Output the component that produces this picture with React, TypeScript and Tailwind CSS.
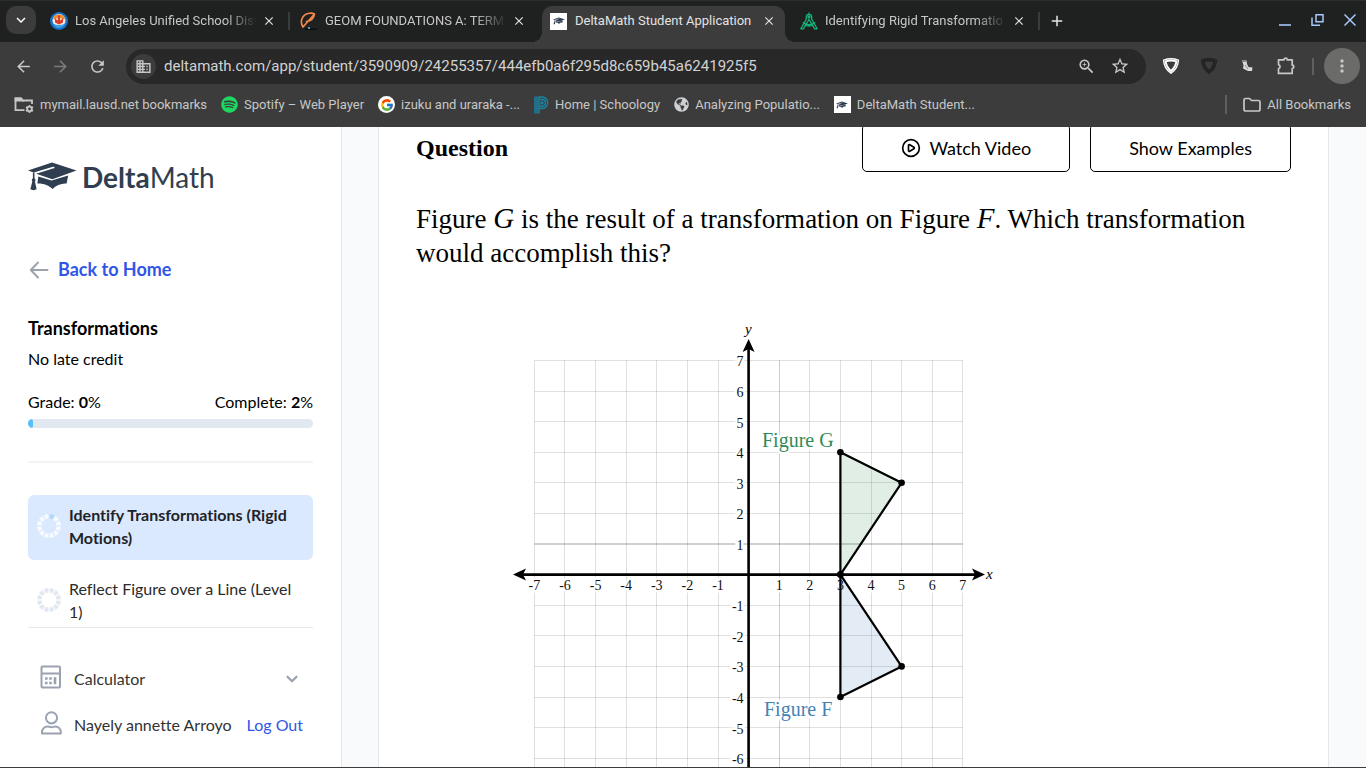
import React, { useState } from 'react';
import { ChevronDown, CirclePlay } from 'lucide-react';
import {
  MdArrowBack,
  MdArrowForward,
  MdRefresh,
  MdBusiness,
  MdZoomIn,
  MdStarBorder,
  MdMoreVert,
  MdClose,
  MdAdd,
  MdKeyboardArrowDown
} from 'react-icons/md';
import { FaSpotify, FaGlobeAmericas } from 'react-icons/fa';
import { FcGoogle } from 'react-icons/fc';

interface Tab {
  id: number;
  title: string;
  icon: React.ReactNode;
  divider: boolean;
}

interface Bookmark {
  title: string;
  icon: React.ReactNode;
}

type Point = [number, number];

function CapIcon({ className }: { className: string }) {
  return (
    <svg viewBox="0 0 50 30" className={className} fill="currentColor" aria-hidden="true">
      <path d="M10.5 14.5 24 18.6 41 13.4 39.4 21.6C34 21.2 28.500 23.400 25 27.200 21.500 23.400 15 21.200 9.600 21.600Z" />
      <path d="M0 8.300 24.500 0.300 49.500 8.300 24.800 17.200 8.400 11.700 25.400 6.300C27.600 6.500 27.600 4.300 25.500 4.600L5.900 10.400Z" />
      <path d="M5 10.500H6.600V16.200C7.900 17.200 7.900 18.700 7.100 19.700L8.800 27.600C6.800 28.700 4.200 28.700 2.400 27.600L4.400 19.700C3.600 18.700 3.700 17.200 5 16.200Z" />
    </svg>
  );
}

function CapTile() {
  return (
    <span className="flex size-[17px] shrink-0 items-center justify-center bg-white text-[#2d3a4d]">
      <CapIcon className="h-2 w-3" />
    </span>
  );
}

function DistrictIcon() {
  return (
    <svg viewBox="0 0 18 18" className="size-[18px] shrink-0" aria-hidden="true">
      <circle cx="9" cy="9" r="9" fill="#1674cc" />
      <circle cx="9" cy="8.500" r="6.500" fill="#f7ece2" />
      <path d="M3 6.500A6.500 6.500 0 0 1 15 6.500L12.500 8 11 5.500 9 9 7 5.500 5.500 8Z" fill="#f08a24" />
      <path d="M8 3.500h2v5l3-2v4l-4 2-4-2v-4l3 2Z" fill="#dc3a2c" />
      <path d="M3 11.500q6 3 12 0-2 4.500-6 4.500t-6-4.500Z" fill="#3fa0e8" />
    </svg>
  );
}

function EdgeIcon() {
  return (
    <svg viewBox="0 0 17 18" className="h-[18px] w-[17px] shrink-0" fill="none" aria-hidden="true">
      <path d="M3 15C-.5 10 2 3 8 1.500c2.500-.6 5-.3 6.500.5C14 6 11 9 6.500 9.500M3 15 14.300 2.200" stroke="#f0884a" strokeWidth="1.700" strokeLinecap="round" strokeLinejoin="round" />
      <path d="M5 17.200h12" stroke="#0c0f10" strokeWidth="1.500" />
      <path d="M8 16h2" stroke="#6ec6e8" strokeWidth="1.500" />
    </svg>
  );
}

function CompassIcon() {
  return (
    <svg viewBox="0 0 18 18" className="size-[18px] shrink-0" fill="none" stroke="#17b37b" strokeWidth="1.300" strokeLinejoin="round" aria-hidden="true">
      <path d="M9 .5v1.500M6.300 5a2.700 2.700 0 0 1 5.400 0v2.200l5.500 9.600h-2.600L9 7.500 3.400 16.800H.8L6.300 7.200Z" />
      <circle cx="9" cy="5" r="1" />
      <path d="M2.800 10.300q6.200 4.700 12.400 0M4.500 13q4.500 2 9 0" />
    </svg>
  );
}

function ManagedFolderIcon() {
  return (
    <svg viewBox="0 0 20 18" className="h-[18px] w-5 shrink-0" fill="none" stroke="#c7c7c7" strokeWidth="1.800" aria-hidden="true">
      <path d="M10.500 14.100H1.500V2.500H7l2 2h9v3.500" />
      <path d="M1.500 2.500H7l1.500 2h-7Z" fill="#c7c7c7" />
      <circle cx="15.500" cy="13" r="2.300" />
      <path d="M15.500 9v1.500M15.500 15.500V17M12 11l1.400.8M17.600 14.200l1.400.8M12 15l1.400-.8M17.600 11.800l1.400-.8" strokeWidth="1.600" />
    </svg>
  );
}

function PowerSchoolIcon() {
  return (
    <svg viewBox="0 0 15 18" className="h-[18px] w-[15px] shrink-0" fill="none" stroke="#1787a8" aria-hidden="true">
      <path d="M1 .5v17M3 .5v17M5 .5v17" strokeWidth="1.400" />
      <path d="M5 1h3a5.500 5.500 0 0 1 0 11.500H5M6 3.500h2a3.200 3.200 0 0 1 0 6.700H6M6.500 6h1.500a.8.800 0 0 1 0 1.800H6.500" strokeWidth="1.400" />
    </svg>
  );
}

function ShieldIcon({ className }: { className: string }) {
  return (
    <svg viewBox="0 0 18 18" className={className} fill="none" stroke="currentColor" strokeLinejoin="round" aria-hidden="true">
      <path d="M1.600 3.200Q9 .4 16.400 3.200 16 11.500 9 16.200 2 11.500 1.600 3.200Z" strokeWidth="1.400" />
      <path d="M3.600 4.400Q9 2.500 14.400 4.400 13.500 10.500 9 14 4.500 10.500 3.600 4.400Z" strokeWidth="2" />
    </svg>
  );
}

function BootIcon() {
  return (
    <svg viewBox="-2 -2 18 18" className="size-[18px]" aria-hidden="true">
      <path d="M2 1.500h4.500L7 5l1.500 3 4 .5-.5 3.500H8L3 9.500 3.500 6Z" fill="#d9d9d9" />
      <path d="M2 2.500h4M5 6l3 4" stroke="#8a8a8a" strokeWidth="1" />
    </svg>
  );
}

function PuzzleIcon() {
  return (
    <svg viewBox="0 0 20 20" className="size-5" fill="none" stroke="currentColor" strokeWidth="1.700" strokeLinejoin="round" aria-hidden="true">
      <path d="M2.500 3.800H8a1.600 1.600 0 0 1 3.200 0h5v5.400a1.600 1.600 0 0 1 0 3.200v5H2.500v-4.600a2.200 2.200 0 0 0 0-4.200Z" />
    </svg>
  );
}

function FolderIcon() {
  return (
    <svg viewBox="0 0 18 16" className="h-4 w-[18px]" fill="none" stroke="currentColor" strokeWidth="1.700" strokeLinejoin="round" aria-hidden="true">
      <path d="M1 3a1.500 1.500 0 0 1 1.500-1.500h4l2 2H15.500A1.500 1.500 0 0 1 17 5v7.500a1.500 1.500 0 0 1-1.500 1.500h-13A1.500 1.500 0 0 1 1 12.500Z" />
    </svg>
  );
}

function CalculatorIcon() {
  return (
    <svg viewBox="0 0 22 24" className="mb-1 h-6 w-[22px] shrink-0" fill="none" stroke="#9aa1b1" strokeWidth="2" aria-hidden="true">
      <rect x="1.500" y="1.500" width="18.500" height="21" rx="1" />
      <path d="M1.500 8.500h18.500" />
      <path d="M5 13.500h2.600M9.200 13.500h2.600M5 18h2.600M9.200 18h2.600" strokeWidth="2.600" />
      <path d="M15 12.200v7.100" strokeWidth="2.600" />
    </svg>
  );
}

function UserIcon() {
  return (
    <svg viewBox="0 0 22 24" className="mb-1 h-6 w-[22px] shrink-0" fill="none" stroke="#9aa1b1" strokeWidth="2" strokeLinejoin="round" aria-hidden="true">
      <circle cx="11.500" cy="6.800" r="5.600" />
      <path d="M2 22.500v-1.500c0-3 2.500-5.500 5.500-5.500 1.500 0 2.300.7 4 .7s2.300-.7 3.800-.7c3 0 5.500 2.500 5.500 5.500v1.500Z" />
    </svg>
  );
}

const tabs: Tab[] = [
  { id: 1, title: 'Los Angeles Unified School Dist', icon: <DistrictIcon />, divider: true },
  { id: 2, title: 'GEOM FOUNDATIONS A: TERM', icon: <EdgeIcon />, divider: false },
  { id: 3, title: 'DeltaMath Student Application', icon: <CapTile />, divider: false },
  { id: 4, title: 'Identifying Rigid Transformatio', icon: <CompassIcon />, divider: true }
];

const bookmarks: Bookmark[] = [
  { title: 'mymail.lausd.net bookmarks', icon: <ManagedFolderIcon /> },
  { title: 'Spotify – Web Player', icon: <FaSpotify className="size-[17px] shrink-0 text-[#1ed760]" /> },
  {
    title: 'izuku and uraraka -...',
    icon: (
      <span className="flex size-[17px] shrink-0 items-center justify-center rounded-full bg-white">
        <FcGoogle className="size-3.5" />
      </span>
    )
  },
  { title: 'Home | Schoology', icon: <PowerSchoolIcon /> },
  { title: 'Analyzing Populatio...', icon: <FaGlobeAmericas className="size-[15px] shrink-0 text-[#cdd0d4]" /> },
  { title: 'DeltaMath Student...', icon: <CapTile /> }
];

function TabStrip() {
  const [active, setActive] = useState(3);

  return (
    <div className="flex h-[42px] items-end border-t border-[#2c2e2d] bg-[#1f2120] text-[13px] text-[#c7c7c7]">
      <button aria-label="Search tabs" className="mb-2 ml-1.5 mr-1.5 flex h-7 w-[30px] items-center justify-center rounded-[10px] bg-[#3c3c3c] text-white">
        <MdKeyboardArrowDown className="size-[18px]" />
      </button>
      {tabs.map((tab) => (
        <div key={tab.id} className="flex h-9 w-[250px] items-center">
          <div className={`relative flex h-9 w-[243px] items-center rounded-t-[10px] pb-1.5 pl-2 pr-2 ${tab.id === active ? 'bg-[#3c3c3c] text-[#e3e3e3]' : ''}`}>
            {tab.id === active && (
              <>
                <span className="absolute -left-2.5 bottom-0 size-2.5 bg-[radial-gradient(circle_at_0_0,#1f2120_10px,#3c3c3c_10px)]"></span>
                <span className="absolute -right-2.5 bottom-0 size-2.5 bg-[radial-gradient(circle_at_100%_0,#1f2120_10px,#3c3c3c_10px)]"></span>
              </>
            )}
            <span className="mr-2 flex w-[17px] shrink-0 justify-center">{tab.icon}</span>
            <button
              onClick={() => setActive(tab.id)}
              className={`min-w-0 flex-1 overflow-hidden whitespace-nowrap text-left ${tab.id === active ? '' : '[mask-image:linear-gradient(to_right,black_150px,transparent_182px)]'}`}
            >
              {tab.title}
            </button>
            <button aria-label={`Close ${tab.title}`} className="flex size-4 shrink-0 items-center justify-center text-[#e3e3e3]">
              <MdClose className="size-3.5" />
            </button>
          </div>
          {tab.divider && <span className="mb-1.5 ml-[3px] h-[18px] w-0.5 bg-[#3c3c3c]"></span>}
        </div>
      ))}
      <button aria-label="New tab" className="mb-3 ml-1.5 flex size-[18px] items-center justify-center text-[#e3e3e3]">
        <MdAdd className="size-[18px]" />
      </button>
      <div className="mb-4 ml-auto mr-2.5 flex items-center gap-5 text-[#a8c7fa]">
        <button aria-label="Minimize">
          <svg viewBox="0 0 12 12" className="size-3" stroke="currentColor" strokeWidth="1.600"><path d="M0 11h12" /></svg>
        </button>
        <button aria-label="Restore">
          <svg viewBox="0 0 13 12" className="h-3 w-[13px]" fill="none" stroke="currentColor" strokeWidth="1.500"><path d="M5 .8h7v7H5ZM1 3.500v7.700h8" /></svg>
        </button>
        <button aria-label="Close window">
          <svg viewBox="0 0 12 12" className="size-3" stroke="currentColor" strokeWidth="1.500"><path d="m.5.5 11 11M11.500.5l-11 11" /></svg>
        </button>
      </div>
    </div>
  );
}

function Toolbar() {
  return (
    <div className="flex h-12 items-center bg-[#3c3c3c] pl-3.5 pr-1.5 text-[#c7c7c7]">
      <div className="flex w-28 items-center gap-[18px]">
        <button aria-label="Back"><MdArrowBack className="size-[19px]" /></button>
        <button aria-label="Forward" className="text-[#7c7c7c]"><MdArrowForward className="size-[19px]" /></button>
        <button aria-label="Reload"><MdRefresh className="size-[19px]" /></button>
      </div>
      <div className="flex h-[35px] flex-1 items-center rounded-full bg-[#282828] pl-[5px] pr-4">
        <span className="flex size-[25px] items-center justify-center rounded-full bg-[#3c3c3c]">
          <MdBusiness className="size-[17px]" />
        </span>
        <input
          aria-label="Address"
          className="ml-2 min-w-0 flex-1 bg-transparent text-[15px] text-[#d2d2d2] outline-none"
          defaultValue="deltamath.com/app/student/3590909/24255357/444efb0a6f295d8c659b45a6241925f5"
        />
        <button aria-label="Zoom" className="mr-3.5"><MdZoomIn className="size-[19px]" /></button>
        <button aria-label="Bookmark this tab"><MdStarBorder className="size-5" /></button>
      </div>
      <div className="ml-4 flex items-center gap-5">
        <button aria-label="Web filter"><ShieldIcon className="size-[18px] text-white" /></button>
        <button aria-label="Web filter (inactive)"><ShieldIcon className="size-[18px] text-[#222222]" /></button>
        <button aria-label="Boot"><BootIcon /></button>
        <button aria-label="Extensions"><PuzzleIcon /></button>
      </div>
      <span className="ml-4 mr-2.5 h-[17px] w-0.5 bg-[#5f5f5f]"></span>
      <button aria-label="Menu" className="flex size-9 items-center justify-center rounded-full bg-[#6b6b69]">
        <MdMoreVert className="size-5" />
      </button>
    </div>
  );
}

function BookmarksBar() {
  return (
    <nav className="flex h-[37px] items-center bg-[#3c3c3c] pb-2 pl-3.5 pr-[15px] text-[13px] text-[#c7c7c7]">
      <div className="flex items-center gap-3.5">
        {bookmarks.map((item) => (
          <a key={item.title} href="#" className="flex items-center gap-1.5 whitespace-nowrap">
            {item.icon}
            {item.title}
          </a>
        ))}
      </div>
      <a href="#" className="ml-auto flex items-center gap-1.5 border-l-2 border-[#5f5f5f] pl-4">
        <FolderIcon />
        All Bookmarks
      </a>
    </nav>
  );
}

function ProgressRing({ started }: { started: boolean }) {
  return (
    <svg viewBox="0 0 24 24" className="size-6 shrink-0" fill="none" strokeWidth="4.500" aria-hidden="true">
      {Array.from({ length: 12 }, (_, i) => {
        const color = started ? (i === 0 ? '#b3d6fb' : '#f7faff') : '#e2e8f0';
        return <path key={i} d="M12.600 2.300A9.700 9.700 0 0 1 16.300 3.300" stroke={color} transform={`rotate(${i * 30} 12 12)`} />;
      })}
    </svg>
  );
}

function Sidebar() {
  return (
    <aside className="flex w-[342px] shrink-0 flex-col border-r border-gray-200 bg-white px-7 font-['Lato',sans-serif] text-black [font-variant-ligatures:none]">
      <a href="#" aria-label="DeltaMath" className="mt-[26px] flex h-12 items-center gap-[5px] text-[#2f3e50]">
        <CapIcon className="h-[30px] w-[49px]" />
        <span className="text-[28px] leading-10">
          <span className="font-bold">Delta</span>
          <span>Math</span>
        </span>
      </a>
      <a href="#" className="mt-[54px] flex h-7 items-center gap-2 text-[18px] font-bold text-[#3056e8]">
        <svg viewBox="0 0 22 20" className="h-5 w-[22px]" fill="none" stroke="#9ca3af" strokeWidth="2" strokeLinecap="round" strokeLinejoin="round">
          <path d="M19.500 11H3M10 3.500 2.800 11l7.200 7.500" />
        </svg>
        Back to Home
      </a>
      <h2 className="mt-[33px] text-[18px] font-bold leading-6">Transformations</h2>
      <p className="mt-[7px] text-[16px] leading-6">No late credit</p>
      <div className="mt-[19px] flex justify-between text-[16px] leading-6">
        <span>Grade: <b>0</b>%</span>
        <span>Complete: <b>2</b>%</span>
      </div>
      <div role="progressbar" aria-valuenow={2} className="mt-[5px] h-[9px] overflow-hidden rounded-full bg-slate-200">
        <div className="h-full w-[5px] rounded-full bg-[#54c1f8]"></div>
      </div>
      <hr className="mt-[33px] border-t-2 border-gray-100" />
      <ul className="mt-8 min-h-0 flex-1 space-y-[9px] overflow-hidden border-b border-gray-200 text-[16px] leading-[23px] text-[#2b2b2b]">
        <li>
          <a href="#" className="flex items-center gap-2 rounded-md bg-[#dbe9fe] pb-[11px] pl-[9px] pr-3 pt-2 font-bold text-[#1f2328]">
            <ProgressRing started={true} />
            Identify Transformations (Rigid Motions)
          </a>
        </li>
        <li>
          <a href="#" className="flex items-center gap-2 pb-[11px] pl-[9px] pr-3 pt-2">
            <ProgressRing started={false} />
            Reflect Figure over a Line (Level 1)
          </a>
        </li>
      </ul>
      <div className="flex h-[139px] shrink-0 flex-col pl-3 pr-2.5 pt-7 text-[16px] text-[#333333]">
        <button className="flex h-[46px] items-center text-left">
          <CalculatorIcon />
          <span className="ml-3 flex-1">Calculator</span>
          <ChevronDown className="mr-0.5 size-[18px] text-[#9aa1b1]" strokeWidth={3} />
        </button>
        <div className="flex h-[46px] items-center justify-between">
          <div className="flex items-center gap-3">
            <UserIcon />
            Nayely annette Arroyo
          </div>
          <a href="#" className="text-[#3056e8]">Log Out</a>
        </div>
      </div>
    </aside>
  );
}

const UNIT = 30.6;
const ORIGIN_X = 248.6;
const ORIGIN_Y = 264.6;
const px = (x: number) => ORIGIN_X + x * UNIT;
const py = (y: number) => ORIGIN_Y - y * UNIT;

const figureG: Point[] = [[3, 0], [3, 4], [5, 3]];
const figureF: Point[] = [[3, 0], [3, -4], [5, -3]];
const ticks = Array.from({ length: 15 }, (_, i) => i - 7);

function Figure({ points, fill }: { points: Point[]; fill: string }) {
  return (
    <g>
      <polygon
        points={points.map(([x, y]) => `${px(x)},${py(y)}`).join(' ')}
        fill={fill}
        fillOpacity="0.15"
        stroke="black"
        strokeWidth="2.200"
        strokeLinejoin="round"
      />
      {points.map(([x, y]) => (
        <circle key={`${x},${y}`} cx={px(x)} cy={py(y)} r="3.300" fill="black" />
      ))}
    </g>
  );
}

function CoordinatePlane() {
  return (
    <svg width="500" height="492" viewBox="0 0 500 492" className="shrink-0 font-['Liberation_Serif',serif]" role="img" aria-label="Coordinate plane">
      <g stroke="black" strokeOpacity="0.120" strokeWidth="1">
        {ticks.map((t) => (
          <g key={t}>
            <path d={`M${Math.floor(px(t)) + 0.5} ${py(7)}V${py(-7)}`} strokeOpacity={t === 1 ? 0.2 : 0.12} />
            <path
              d={`M${px(-7)} ${t === 1 ? 234 : Math.floor(py(t)) + 0.5}H${px(7)}`}
              strokeWidth={t === 1 ? 2 : 1}
              strokeOpacity={t === 1 ? 0.18 : 0.12}
            />
          </g>
        ))}
      </g>

      <g className="text-[14px] [paint-order:stroke]" fill="#111111" stroke="white" strokeWidth="5">
        {ticks.filter((t) => t !== 0).map((t) => (
          <g key={t}>
            <text x={px(t)} y={ORIGIN_Y + 15} textAnchor="middle">{t}</text>
            <text x={ORIGIN_X - 5} y={py(t) + 6} textAnchor="end">{t}</text>
          </g>
        ))}
      </g>
      <g className="text-[20px] [paint-order:stroke]" stroke="white" strokeWidth="5">
        <text x="262" y="137" fill="#2e8b57">Figure G</text>
        <text x="264" y="406" fill="#4682b4">Figure F</text>
      </g>

      {/* axes */}
      <path d={`M20 ${ORIGIN_Y}H478M${ORIGIN_X} 36V492`} stroke="black" strokeWidth="2.600" />
      <path d="M13 264.600 26 258.600 23 264.600 26 270.600ZM485 264.600 472 258.600 475 264.600 472 270.600ZM248.600 29 242.600 42 248.600 39 254.600 42Z" fill="black" />
      <g className="text-[15px] italic">
        <text x="245" y="24">y</text>
        <text x="486" y="269">x</text>
      </g>

      <Figure points={figureG} fill="#2e8b57" />
      <Figure points={figureF} fill="#4682b4" />
    </svg>
  );
}

function QuestionPanel() {
  return (
    <main className="min-w-0 flex-1 overflow-hidden bg-slate-50 pl-9 pr-[37px]">
      <div className="-mt-[23px] border-x border-gray-200 bg-white px-[37px] pt-5 text-black">
        <div className="flex items-center justify-between">
          <h1 className="font-['Liberation_Serif',serif] text-[24px] font-bold leading-8">Question</h1>
          <div className="flex gap-5 font-['Lato',sans-serif] text-[18px]">
            <button className="flex h-12 items-center gap-2 rounded-[5px] border border-black px-[38px]">
              <CirclePlay className="size-5" />
              Watch Video
            </button>
            <button className="h-12 rounded-[5px] border border-black px-[38px]">Show Examples</button>
          </div>
        </div>
        <p className="mt-[30px] font-['Liberation_Serif',serif] text-[27px] leading-[34px]">
          Figure <i className="text-[29px] leading-none">G</i> is the result of a transformation on Figure <i className="text-[29px] leading-none">F</i>. Which transformation would accomplish this?
        </p>
        <div className="mt-10 flex max-w-[668px] justify-center">
          <CoordinatePlane />
        </div>
      </div>
    </main>
  );
}

export default function App() {
  return (
    <div className="flex h-screen flex-col overflow-hidden border-b border-[#3c3c3c] font-['Roboto',sans-serif]">
      <header className="shrink-0">
        <TabStrip />
        <Toolbar />
        <BookmarksBar />
      </header>
      <div className="flex min-h-0 flex-1">
        <Sidebar />
        <QuestionPanel />
      </div>
    </div>
  );
}
